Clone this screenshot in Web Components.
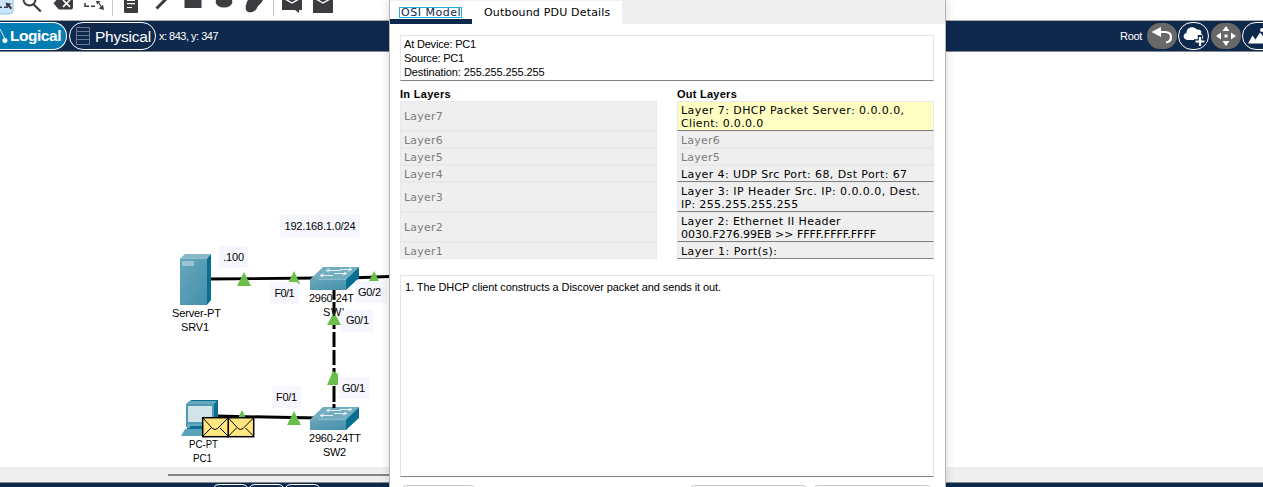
<!DOCTYPE html>
<html lang="en"><head><meta charset="utf-8"><title>Packet Tracer</title>
<style>
html,body{margin:0;width:1263px;height:487px;overflow:hidden;background:#fff;font-family:"Liberation Sans",Arial,sans-serif;font-size:11px;color:#000}
</style></head><body>
<pt-app></pt-app>
<script>
const define=(name,html,init)=>customElements.define(name,class extends HTMLElement{
  connectedCallback(){
    if(this.shadowRoot)return;
    const t=document.createElement('template');t.innerHTML=html;
    this.attachShadow({mode:'open'}).append(t.content.cloneNode(true));
    if(init)init.call(this,this.shadowRoot);
  }
});

/* One line of text spread over a set width in pixels */
define('fit-text','<style>:host{display:block;white-space:pre}span{display:inline-block}</style><span><slot></slot></span>',function(r){
  const s=r.querySelector('span'),n=this.textContent.length;
  const w=s.getBoundingClientRect().width;
  if(w&&n)s.style.letterSpacing=((+this.getAttribute('w')-w)/n)+'px';
});

define('tool-bar',`<style>:host{display:block;height:20px;overflow:hidden}svg{display:block}</style>
<svg width="389" height="20" fill="#3b3c40" stroke="none">
<path d="M-2-5H9Q13-5 13-1V10Q13 14 9 14H-2z" fill="#cbe6fb" stroke="#86c3f3"/>
<path d="M0 7.300h2M4 7.300h4" stroke="#3b3c40" stroke-width="1.600"/><path d="M5.500 2.500l6 1.300-1.800 1.200 2.300 3-1.300 1.400-2.700-3-1.200 1.600z"/>
<g fill="none" stroke="#3b3c40"><circle cx="29.500" cy="-.5" r="6" stroke-width="2"/><path d="M33.500 4.300l7.300 7.200" stroke-width="2.200"/></g>
<path d="M53.500 3.300L59-3H73V7.500Q73 9.500 71 9.500H60Q58.800 9.500 58 8.700z"/><path d="M63-0l7 6.800M70 0l-7 6.800" stroke="#fff" stroke-width="1.700"/>
<path d="M85 3v3.200h4M91 6.200h4" fill="none" stroke="#3b3c40" stroke-width="1.500"/><path d="M98.500 2.500l3 4.500" stroke="#3b3c40" stroke-width="1.300"/><path d="M104 10l-5.400-1.600 4.500-3.400zM96 1h4.500l-3.500 3.500z"/>
<path d="M112.500 0V16M273.500 0V16" stroke="#c7c7c7"/>
<rect x="124" y="-5" width="14" height="18" rx="1"/><path d="M127 .3h8M127 3.700h8M127 7.500h5" stroke="#fff" stroke-width="1.200"/>
<path d="M156.500 8.500L167-2" stroke="#3b3c40" stroke-width="3"/>
<rect x="184.500" y="-4" width="17" height="12"/><ellipse cx="224" cy="2" rx="8.400" ry="5.500"/>
<path d="M247-2C250-1 253-1 255-3L263-1C262 4 258 5 257 8C255 12 251 13 248 12C244 10 246 3 248 0z"/>
<path d="M282-5h20V10h-3v3l-4-3h-13z"/><path d="M285-1l7 4L299-1" fill="none" stroke="#fff" stroke-width="1.400"/>
<rect x="313" y="-5" width="20" height="18"/><path d="M316-1l7 4L330-1" fill="none" stroke="#fff" stroke-width="1.400"/>
</svg>`);

define('nav-bar',`<style>
:host{display:flex;box-sizing:border-box;height:32px;background:#0f294d;border-top:1px solid #a5a9ae;border-bottom:1px solid #7f8793;color:#fff;align-items:center}
.tab{display:flex;align-items:center;box-sizing:border-box;height:28px;border:1px solid #fff;border-radius:14px}
.log{width:67px;background:#027db2;border-left:0;border-radius:0 14px 14px 0;font-weight:bold;font-size:15.500px}
.phy{width:87px;margin-left:2px;font-size:15.500px}.phy fit-text{padding-top:2px}
.xy{margin-left:3px}.root{margin-left:auto;margin-right:5px}svg{display:block}
</style>
<div class="tab log"><svg width="10" height="26" style="flex:none"><path d="M0 6l5.500 11" stroke="#d7edf6" stroke-width="1"/><circle cx="4.900" cy="17.500" r="2.500" fill="#fff"/></svg><fit-text w="51">Logical</fit-text></div>
<div class="tab phy"><svg width="25" height="26" style="flex:none"><path d="M6.500 4.500h13v17h-13zM6.500 8.500h13M6.500 12.500h13M6.500 16.500h13" fill="none" stroke="#69798f"/></svg><fit-text w="56">Physical</fit-text></div>
<fit-text class="xy" w="59">x: 843, y: 347</fit-text>
<fit-text class="root" w="22">Root</fit-text>
<svg width="116" height="30" fill="#fff"><rect x="0" y="2" width="30" height="26" rx="13" fill="#686868"/>
<path d="M4.500 11L14 6v10z"/><path d="M12 11h6c4 0 6 2.200 6 5 0 3-2 5-5 5.500" fill="none" stroke="#fff" stroke-width="2.200"/>
<rect x="31.500" y="1.500" width="30" height="27" rx="13.500" fill="none" stroke="#fff"/>
<path d="M41 19c-5 0-6-6-1.500-7.300 0-6.500 8.500-7 10.500-3 4-1 5 2.500 4 4 2.500 1 3 5 .5 6.300z"/><path d="M53 14v12M47 20.500h12" stroke="#0f294d" stroke-width="4.500"/><path d="M53 16v9M48.500 20.500h9" stroke="#fff" stroke-width="2.200"/>
<rect x="64" y="2" width="30" height="26" rx="13" fill="#686868"/><path d="M75.500 10h7L79 5zM75.500 20h7L79 25zM74 11.500v7L69 15zM84 11.500v7L89 15z"/><rect x="77.500" y="13.500" width="3" height="3"/>
<rect x="95.500" y="1.500" width="40" height="27" rx="13.500" fill="none" stroke="#fff"/><path d="M101 22.500l4.500-8 3 4 4.500-7 5 6v5z"/><circle cx="115" cy="9" r="2"/></svg>`);

define('net-canvas',`<style>:host{display:block}svg{display:block}text{font:11px "Liberation Sans",Arial,sans-serif}</style>
<svg width="389" height="415" viewBox="0 52 389 415">
<defs>
<linearGradient id="f" x2="1" y2="1"><stop stop-color="#69a8bc"/><stop offset="1" stop-color="#438fab"/></linearGradient>
<g id="sw"><path d="M310 279.500L323 267H359L346 279.500z" fill="#72adc0"/><path d="M310 279.500H346V290H310z" fill="url(#f)"/><path d="M346 279.500L359 267V278L346 290z" fill="#096f90"/>
<path d="M328 270.500h13M330 268.800l-4 1.700 3 1.500M340 269.500h11M349 268l3 1.500-4 1.500M321 275.500h12M324 273.800l-4 1.700 3 1.500M334 273.500h12M344 272l3 1.500-4 1.500" fill="none" stroke="#eaf5f7" stroke-width=".9"/></g>
<g id="env"><rect x="202.700" y="417.700" width="25.500" height="19" fill="#ffe680" stroke="#000" stroke-width="1.500"/><path d="M203 418l9.500 10.500q2.500 2 5 0L228 418M203 436l8-8M228 436l-8-8" fill="none" stroke="#000"/></g>
</defs>
<path d="M210 279L318 278M350 278L389 276.500" stroke="#000" stroke-width="2.800"/>
<path d="M216 416L318 418" stroke="#000" stroke-width="2.800"/>
<g fill="#f6f7fe"><rect x="280" y="215" width="80" height="22"/><rect x="219" y="246" width="29" height="22"/></g>
<path d="M180 258.500L185 254H211L207 258.500z" fill="#86b8c8"/><path d="M180 258.500h27V305h-27z" fill="url(#f)"/><path d="M207 258.500l4-4.500v46l-4 5z" fill="#096f90"/><rect x="182" y="261" width="12" height="5" fill="#9bc4d2"/>
<use href="#sw"/><use href="#sw" y="140"/>
<path d="M334 290v9M334 302v12M334 317v12M334 332v15M334 350v15M334 368v14M334 386v16M334 404v4" stroke="#000" stroke-width="3"/>
<g fill="#f6f7fe"><rect x="270" y="282" width="29" height="22"/><rect x="355" y="281" width="32" height="22"/><rect x="341" y="310" width="32" height="22"/><rect x="272" y="386" width="29" height="22"/><rect x="338" y="377" width="31" height="22"/></g>
<g fill="#6abf4b"><path d="M244 272l7 14h-14zM294 271l6.500 14-4-3H288.500zM374 271l5 10h-10zM334 312l7 13h-14zM333 371l5 3v11h-11zM294 411l7 14h-14zM242 410l4 8h-8z"/></g>
<path d="M187 404l4-4h27v24l-4 5H187z" fill="#096f90"/><path d="M186 404h28v23h-28z" fill="#4d9bb5"/><path d="M186 404l3-3h28l-3 3z" fill="#69a8bc"/><rect x="188" y="406" width="24" height="16" rx="1" fill="#d2e3e9"/><path d="M187 424h24l3 4H187z" fill="#65a9bd"/><path d="M181 436l4-7h35v7z" fill="#5ca2b8"/><path d="M190 426h20v3h-20z" fill="#0c7190"/>
<use href="#env" x="25.500"/><use href="#env"/>
<g id="labels"></g></svg>`,function(r){
  [['192.168.1.0/24',284.5,230,71],['.100',223,261,21],['F0/1',274.5,297,20],['2960-24T',309,302,45],['G0/2',358,296,23],["SW'",323,316,21],['G0/1',346,324,23],['Server-PT',172,317,49],['SRV1',181,331,28],['F0/1',276,401,21],['G0/1',342,392,23],['2960-24TT',309,442,52],['SW2',323,456,23],['PC-PT',189,448,29],['PC1',193,462,19]].forEach(([s,x,y,w])=>{
    const t=document.createElementNS('http://www.w3.org/2000/svg','text');
    t.textContent=s;t.setAttribute('x',x);t.setAttribute('y',y);t.setAttribute('textLength',w);
    if(s.startsWith('PC'))t.setAttribute('lengthAdjust','spacingAndGlyphs');
    r.getElementById('labels').append(t);
  });
});

define('status-bar',`<style>:host{display:block;height:20px;background:#efefef}svg{display:block}</style>
<svg width="1263" height="20"><path d="M168 8H945" stroke="#858585" stroke-width="2"/><path fill="#0f294d" d="M0 16h1263v4H0z"/><path fill="#818992" d="M0 15h1263v1H0z"/>
<g fill="none" stroke="#fff"><path d="M214 20q1-2.500 5-2.500h23q4 0 5 2.500M250 20q1-2.500 5-2.500h23q4 0 5 2.500M286 20q1-2.500 5-2.500h23q4 0 5 2.500"/></g></svg>`);

define('layer-row',`<style>
:host{display:flex;flex-direction:column;justify-content:center;box-sizing:border-box;height:17px;padding:1px 0 0 3px;background:#efefef;border:1px solid #e9e9e9;color:#7d7d7d;line-height:13px}
:host([tall]){height:30px}:host([on]){color:#000;border-bottom-color:#808080}:host([hot]){background:#ffffc4}
</style><slot></slot>`);

define('layer-list',`<style>:host{display:block;width:257px;font:11px/13px "DejaVu Sans",Verdana,sans-serif}
h3{margin:0;height:14px;font:bold 11px/14px "Liberation Sans",Arial,sans-serif;color:#000}</style><h3><slot name="title"></slot></h3><slot></slot>`);

define('pdu-dialog',`<style>
:host{display:block;box-sizing:border-box;width:557px;height:487px;background:#fff;border:solid #b5b5b5;border-width:0 1px;overflow:hidden;box-shadow:0 0 9px rgba(0,0,0,.16)}
.tabs{display:flex;box-sizing:border-box;height:24px;background:#efefef;border-top:1px solid #f0f0f8;font:11px/14px "DejaVu Sans",Verdana,sans-serif}
.a,.b{box-sizing:border-box;background:#fff}.a{width:82px;height:23px;border-bottom:5px solid #0f294d;padding:6px 0 0 9px}
.a fit-text{box-sizing:border-box;width:63px;height:11px;border:1px solid #1fb3e0;line-height:10px;padding-left:1px;text-decoration:underline;color:#0f294d}
.b{width:150px;padding:5px 0 0 12px}
.box{box-sizing:border-box;width:534px;margin-left:10px;border:1px solid #e5e5e5;border-bottom-color:#808080}
.info{height:46px;margin-top:11px;padding:1px 3px;line-height:14px}
.cols{display:flex;gap:20px;margin:6px 0 0 10px}
.desc{height:202px;margin-top:16px;padding:5px 4px;line-height:13px}
.btns{display:flex;margin:8px 0 0 12px}.btns i{box-sizing:border-box;height:20px;border:1px solid #c9c9c9;border-radius:4px}
</style>
<div class="tabs"><div class="a"><fit-text w="60">OSI Model</fit-text></div><div class="b"><fit-text w="126.500">Outbound PDU Details</fit-text></div></div>
<div class="box info"><fit-text w="72">At Device: PC1</fit-text><fit-text w="60">Source: PC1</fit-text><fit-text w="140.500">Destination: 255.255.255.255</fit-text></div>
<div class="cols">
<layer-list><fit-text slot="title" w="51">In Layers</fit-text>
<layer-row tall><fit-text w="39">Layer7</fit-text></layer-row><layer-row><fit-text w="39">Layer6</fit-text></layer-row><layer-row><fit-text w="39">Layer5</fit-text></layer-row><layer-row><fit-text w="39">Layer4</fit-text></layer-row><layer-row tall><fit-text w="39">Layer3</fit-text></layer-row><layer-row tall><fit-text w="39">Layer2</fit-text></layer-row><layer-row><fit-text w="39">Layer1</fit-text></layer-row></layer-list>
<layer-list><fit-text slot="title" w="60">Out Layers</fit-text>
<layer-row tall on hot><fit-text w="223.500">Layer 7: DHCP Packet Server: 0.0.0.0,</fit-text><fit-text w="82.500">Client: 0.0.0.0</fit-text></layer-row>
<layer-row><fit-text w="39">Layer6</fit-text></layer-row><layer-row><fit-text w="39">Layer5</fit-text></layer-row>
<layer-row on><fit-text w="226.500">Layer 4: UDP Src Port: 68, Dst Port: 67</fit-text></layer-row>
<layer-row tall on><fit-text w="239.500">Layer 3: IP Header Src. IP: 0.0.0.0, Dest.</fit-text><fit-text w="117.500">IP: 255.255.255.255</fit-text></layer-row>
<layer-row tall on><fit-text w="160">Layer 2: Ethernet II Header</fit-text><fit-text w="195">0030.F276.99EB &gt;&gt; FFFF.FFFF.FFFF</fit-text></layer-row>
<layer-row on><fit-text w="96.500">Layer 1: Port(s):</fit-text></layer-row></layer-list>
</div>
<div class="box desc"><fit-text w="316">1. The DHCP client constructs a Discover packet and sends it out.</fit-text></div>
<div class="btns"><i style="width:73px"></i><i style="width:117px;margin-left:215px"></i><i style="width:117px;margin-left:7px"></i></div>`);

define('pt-app',`<style>:host{display:block;width:1263px;height:487px;overflow:hidden;position:relative}
pdu-dialog{position:absolute;left:389px;top:0}</style>
<tool-bar></tool-bar><nav-bar></nav-bar><net-canvas></net-canvas><status-bar></status-bar><pdu-dialog></pdu-dialog>`);
</script></body></html>
